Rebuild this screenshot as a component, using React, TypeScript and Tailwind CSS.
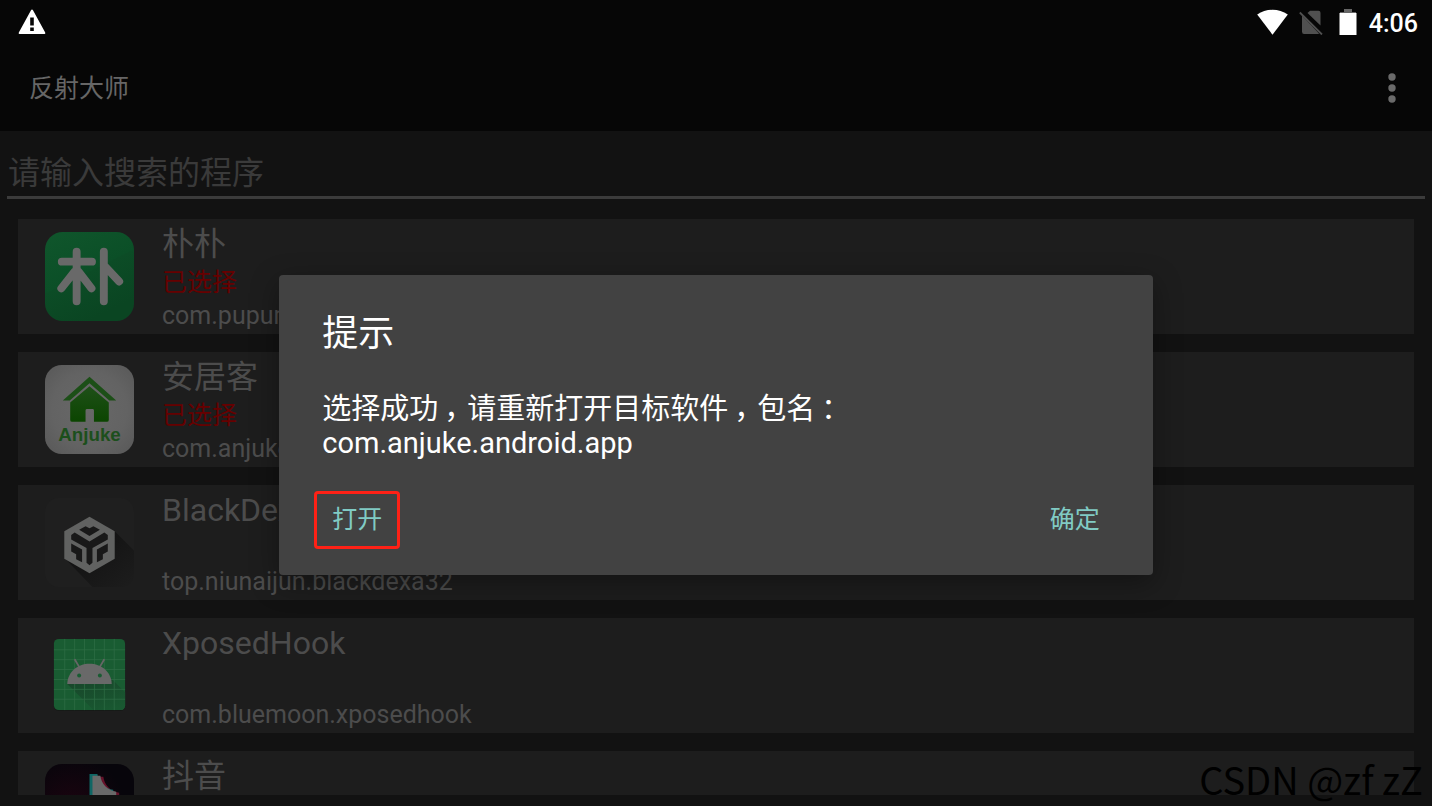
import React from "react";

type AppEntry = {
  name: string;
  pkg?: string;
  selected: boolean;
  icon: React.ReactNode;
};

function PupuIcon() {
  return (
    <svg viewBox="0 0 90 90" className="size-[89px]" aria-hidden="true">
      <defs>
        <linearGradient id="pupu" x1="0" y1="0" x2="0.5" y2="1">
          <stop offset="0" stopColor="#10562c" />
          <stop offset="0.55" stopColor="#0b4f27" />
          <stop offset="0.56" stopColor="#0c4c26" />
          <stop offset="1" stopColor="#0a4522" />
        </linearGradient>
      </defs>
      <rect width="90" height="90" rx="18" fill="url(#pupu)" />
      <g stroke="#696969" strokeWidth="8" strokeLinecap="round" strokeLinejoin="round" fill="none">
        <path d="M17 30H47.500M32 20V70M30 40L16.500 57M34 40L47 57M59.500 20V70M60 34L75 50" />
      </g>
    </svg>
  );
}

function AnjukeIcon() {
  return (
    <svg viewBox="0 0 90 90" className="size-[89px]" aria-hidden="true">
      <defs>
        <radialGradient id="anjukeBg" cx="0.5" cy="0.5" r="0.7">
          <stop offset="0" stopColor="#686868" />
          <stop offset="0.6" stopColor="#636363" />
          <stop offset="1" stopColor="#585858" />
        </radialGradient>
        <linearGradient id="anjukeHouse" x1="0" y1="0" x2="0" y2="1">
          <stop offset="0" stopColor="#1f5019" />
          <stop offset="1" stopColor="#0b4500" />
        </linearGradient>
      </defs>
      <rect width="90" height="90" rx="17" fill="url(#anjukeBg)" />
      <path d="M45 12L72 36H65L45 18.500L25 36H18Z" fill="#1c4f17" />
      <path
        d="M45 21.500L64.500 38V55.500Q64.500 57.500 62.500 57.500H49.500V46Q49.500 44.500 48 44.500H42.500Q41 44.500 41 46V57.500H27.500Q25.500 57.500 25.500 55.500V38Z"
        fill="url(#anjukeHouse)"
      />
      <text
        x="45"
        y="77"
        textAnchor="middle"
        fill="#1c4f1c"
        fontFamily="Liberation Sans, sans-serif"
        fontWeight="700"
        fontSize="19"
      >
        Anjuke
      </text>
    </svg>
  );
}

function BlackDexIcon() {
  return (
    <svg viewBox="0 0 90 90" className="size-[89px]" aria-hidden="true">
      <defs>
        <linearGradient id="dexShadow" x1="0.3" y1="0.3" x2="1" y2="1">
          <stop offset="0" stopColor="#131313" />
          <stop offset="1" stopColor="#1d1d1d" />
        </linearGradient>
      </defs>
      <rect width="90" height="90" rx="14" fill="#1f1f1f" />
      <path d="M70 33L90 53V76Q90 90 76 90H48L20 61Z" fill="url(#dexShadow)" />
      <path d="M45 19L70.500 33.500V61.500L45 76L19.500 61.500V33.500Z" fill="#616261" />
      <g fill="#181818">
        <path d="M34.500 32L41 28.500L45 30.500L49 28.500L55.500 32L45 38.500Z" />
        <path d="M26.500 37.500L30 35L45 44L60 35L63.500 37.500V42L48 50.500V65.500L45 68L42 65.500V50.500L26.500 42Z" />
        <path d="M26.500 46L37.500 52V65L31.500 62V57L26.500 54Z" />
        <path d="M63.500 46L52.500 52V65L58.500 62V57L63.500 54Z" />
      </g>
    </svg>
  );
}

function AndroidIcon() {
  return (
    <svg viewBox="0 0 90 90" className="size-[89px]" aria-hidden="true">
      <defs>
        <linearGradient id="droidShadow" x1="0.2" y1="0" x2="0.7" y2="1">
          <stop offset="0" stopColor="#18462a" />
          <stop offset="1" stopColor="#195831" />
        </linearGradient>
      </defs>
      <rect x="9" y="9" width="72" height="72" rx="5" fill="#161a17" />
      <rect x="9" y="8" width="72" height="72" rx="5" fill="#195c32" />
      <path d="M22.500 53.500L49 80H76Q81 80 81 75V62L67 48Z" fill="url(#droidShadow)" />
      <path
        d="M20 8V80M30 8V80M40 8V80M50 8V80M60 8V80M70 8V80M9 19H81M9 29H81M9 39H81M9 49H81M9 59H81M9 69H81"
        stroke="#2e6c45"
        strokeWidth="0.8"
      />
      <path d="M30 28.500L35 37M60 28.500L55 37" stroke="#666" strokeWidth="1.800" />
      <path d="M22.500 53.500C23 41 33 33 45 33S67 41 67.500 53.500Z" fill="#696969" />
      <circle cx="34.500" cy="45" r="2" fill="#195c32" />
      <circle cx="55.500" cy="45" r="2" fill="#195c32" />
    </svg>
  );
}

function DouyinIcon() {
  const note = "M48 12H56C57 20 63 27 72 28V39C66 39 60 37 56 34V55A18 18 0 1 1 40 37V47A8 8 0 1 0 48 55Z";
  return (
    <svg viewBox="0 0 90 90" className="size-[89px]" aria-hidden="true">
      <defs>
        <radialGradient id="douyinBg" cx="0.3" cy="0.5" r="0.6">
          <stop offset="0" stopColor="#1c0410" />
          <stop offset="1" stopColor="#07050b" />
        </radialGradient>
      </defs>
      <rect width="90" height="90" rx="17" fill="url(#douyinBg)" />
      <path d={note} fill="#66122a" transform="translate(3 1)" />
      <path d={note} fill="#0f6664" transform="translate(-3 -2)" />
      <path d={note} fill="#696969" />
    </svg>
  );
}

const apps: AppEntry[] = [
  { name: "朴朴", pkg: "com.pupumall", selected: true, icon: <PupuIcon /> },
  { name: "安居客", pkg: "com.anjuke", selected: true, icon: <AnjukeIcon /> },
  { name: "BlackDex", pkg: "top.niunaijun.blackdexa32", selected: false, icon: <BlackDexIcon /> },
  { name: "XposedHook", pkg: "com.bluemoon.xposedhook", selected: false, icon: <AndroidIcon /> },
  { name: "抖音", selected: false, icon: <DouyinIcon /> },
];

function StatusBar() {
  return (
    <div className="flex h-11 items-center justify-between pr-[14px] pl-[18px]">
      <svg viewBox="0 0 28 26" className="h-[26px] w-7" aria-label="警告">
        <path
          fillRule="evenodd"
          fill="#fff"
          d="M14 0.500Q14.600 0.500 15 1.200L27.200 23.500Q27.700 25 26.500 25H1.500Q0.300 25 0.800 23.500L13 1.200Q13.400 0.500 14 0.500ZM12.200 8.500V16.500H15.800V8.500ZM12.200 18.500V22H15.800V18.500Z"
        />
      </svg>
      <div className="flex items-center">
        <svg viewBox="0 0 31 26" className="h-[26px] w-[31px]" aria-label="Wi-Fi">
          <path fill="#fff" d="M0.200 5.500Q7 0.800 15.500 0.800T30.800 5.500L15.500 25.700Z" />
        </svg>
        <svg viewBox="0 0 24 26" className="ml-[11px] h-[26px] w-6" aria-label="无 SIM 卡">
          <g fill="#505050">
            <path d="M3 6.500L20 24.500Q19.500 25 18.500 25H5Q3 25 3 22.500Z" />
            <path d="M8.500 4L11 1.700H19.500Q21.500 1.700 21.500 3.700V16.500Z" />
          </g>
          <path d="M0.800 3.500L23 25.500" stroke="#505050" strokeWidth="1.800" />
        </svg>
        <svg viewBox="0 0 18 28" className="ml-4 h-7 w-[18px]" aria-label="电池">
          <path fill="#666" d="M5 1H13V4H17V7H1V4H5Z" />
          <rect x="0.500" y="5" width="17" height="22" fill="#fff" />
        </svg>
        <span className="ml-3 pt-1 text-[25px] leading-8 font-medium text-white">4:06</span>
      </div>
    </div>
  );
}

function AppCard({ app }: { app: AppEntry }) {
  return (
    <li className="flex h-[115px] shrink-0 gap-7 bg-[#1d1d1d] pl-[27px]">
      <div className="shrink-0 pt-[13px]">{app.icon}</div>
      <div className="pt-1 text-[#4c4c4c]">
        <h2 className="h-[42px] text-[32px] leading-[42px]">{app.name}</h2>
        <p className="h-9 text-[25px] leading-9 text-[#660000]">{app.selected ? "已选择" : ""}</p>
        {app.pkg && <p className="text-[25px] leading-[30px]">{app.pkg}</p>}
      </div>
    </li>
  );
}

/* Full-width punctuation, set in the middle of its cell. */
function Mark({ children }: { children: React.ReactNode }) {
  return <span className="inline-block w-[1em] indent-[6px]">{children}</span>;
}

function Dialog() {
  return (
    <div className="absolute inset-0 flex items-center justify-center pt-11">
      <div
        role="dialog"
        aria-labelledby="dialog-title"
        className="w-[61%] rounded-[4px] bg-[#424242] px-[35px] pt-[34px] pb-[26px] text-white shadow-[0_8px_28px_rgba(0,0,0,0.35)]"
      >
        <h2 id="dialog-title" className="px-2 text-[36px] leading-[50px]">
          提示
        </h2>
        <p className="px-2 pt-[33px] text-[29px] leading-[34px]">
          选择成功<Mark>，</Mark>请重新打开目标软件<Mark>，</Mark>包名<Mark>：</Mark>
          <br />
          com.anjuke.android.app
        </p>
        <div className="flex justify-between pt-[31px] text-[25px] leading-[52px] text-[#80cbc4]">
          <button type="button" className="w-[86px] rounded-[4px] border-3 border-[#ff2116]">
            打开
          </button>
          <button type="button" className="w-[86px] border-3 border-transparent">
            确定
          </button>
        </div>
      </div>
    </div>
  );
}

export default function App() {
  return (
    <div
      lang="zh-CN"
      className="relative flex h-screen flex-col overflow-hidden bg-[#121212] pb-[11px] font-[Roboto,'Noto_Sans_CJK_SC',sans-serif]"
    >
      <header className="bg-[#060606]">
        <StatusBar />
        <div className="flex h-[87px] items-center justify-between pr-[18px] pl-[29px]">
          <h1 className="pt-0.5 text-[25px] leading-9 text-[#666]">反射大师</h1>
          <button type="button" aria-label="更多选项" className="flex h-11 w-11 items-center justify-center">
            <svg viewBox="0 0 8 30" className="h-[30px] w-2" fill="#6a6a6a">
              <circle cx="4" cy="4" r="3.700" />
              <circle cx="4" cy="15" r="3.700" />
              <circle cx="4" cy="26" r="3.700" />
            </svg>
          </button>
        </div>
      </header>
      <div className="px-[7px] pt-4">
        <input
          type="text"
          aria-label="请输入搜索的程序"
          placeholder="请输入搜索的程序"
          className="block h-[52px] w-full border-b-3 border-[#3b3b3b] bg-transparent px-px pt-0.5 text-[32px] text-[#4c4c4c] outline-none placeholder:text-[#3a3a3a]"
        />
      </div>
      <ul className="mt-5 flex min-h-0 flex-1 flex-col gap-[18px] overflow-hidden px-[18px]">
        {apps.map((app) => (
          <AppCard key={app.name} app={app} />
        ))}
      </ul>
      <Dialog />
      <p className="absolute right-[9px] bottom-0 font-['Noto_Sans_CJK_SC',sans-serif] text-[38px] leading-[55px] text-black">
        CSDN @zf zZ
      </p>
    </div>
  );
}
